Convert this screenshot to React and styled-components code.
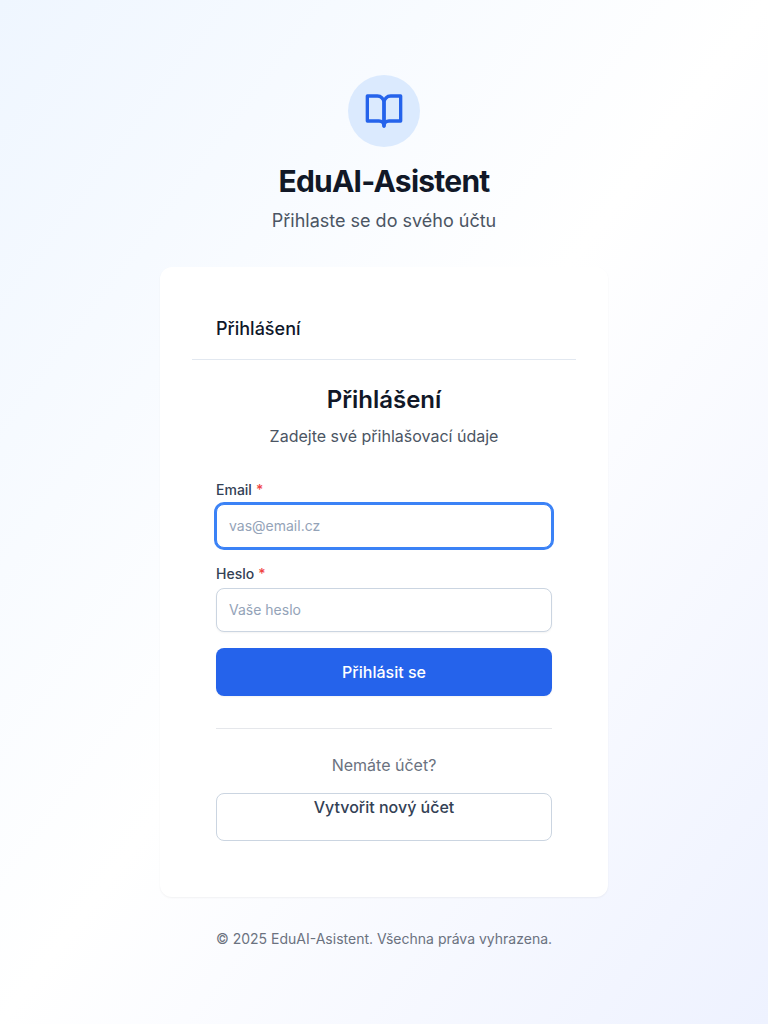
import React from "react";
import styled, { createGlobalStyle } from "styled-components";

const GlobalStyle = createGlobalStyle`
  *, *::before, *::after { box-sizing: border-box; }
  body { margin: 0; font-family: Inter, "Liberation Sans", sans-serif; line-height: 1.5; color: #0f172a; }
  h1, h2, h3, p { margin: 0; }
`;

const Page = styled.div`
  min-height: 100vh;
  display: flex;
  align-items: center;
  justify-content: center;
  background: linear-gradient(to bottom right, #eff6ff, #ffffff, #eef2ff);
`;

const Column = styled.main`
  width: 448px;
  display: flex;
  flex-direction: column;
  gap: 32px;
`;

const Brand = styled.header`
  display: flex;
  flex-direction: column;
  align-items: center;
`;

const LogoCircle = styled.div`
  width: 72px;
  height: 72px;
  margin-bottom: 16px;
  border-radius: 50%;
  display: flex;
  align-items: center;
  justify-content: center;
  background: #dbeafe;
  color: #2563eb;
`;

const BookIcon = styled.svg`
  width: 40px;
  height: 40px;
  fill: none;
  stroke: currentColor;
  stroke-width: 2;
  stroke-linecap: round;
  stroke-linejoin: round;
`;

const BrandTitle = styled.h1`
  font-size: 30px;
  line-height: 36px;
  font-weight: 700;
  letter-spacing: -0.025em;
  margin-bottom: 8px;
  color: #111827;
`;

const BrandText = styled.p`
  font-size: 18px;
  line-height: 28px;
  color: #4b5563;
`;

const Card = styled.section`
  background: #ffffff;
  border-radius: 12px;
  padding: 32px;
  box-shadow: 0 1px 2px rgba(0, 0, 0, 0.05);
`;

const CardHeader = styled.div`
  padding: 16px 24px;
  border-bottom: 1px solid #e2e8f0;
`;

const CardTitle = styled.h3`
  font-size: 18px;
  line-height: 28px;
  font-weight: 500;
`;

const CardBody = styled.div`
  padding: 24px;
`;

const FormIntro = styled.div`
  text-align: center;
  margin-bottom: 32px;
`;

const FormTitle = styled.h2`
  font-size: 24px;
  line-height: 32px;
  font-weight: 600;
  margin-bottom: 8px;
  color: #111827;
`;

const Muted = styled.p`
  font-size: 16px;
  line-height: 24px;
  color: ${(p) => p.$color || "#4b5563"};
`;

const Form = styled.form`
  display: flex;
  flex-direction: column;
  gap: 16px;
`;

const Field = styled.div`
  display: flex;
  flex-direction: column;
  gap: 4px;
`;

const Label = styled.label`
  font-size: 14px;
  line-height: 20px;
  font-weight: 500;
  color: #334155;
`;

const Required = styled.span`
  margin-left: 4px;
  color: #ef4444;
`;

const Input = styled.input`
  height: 44px;
  padding: 8px 12px 10px;
  border: 1px solid ${(p) => (p.$active ? "#3b82f6" : "#cbd5e1")};
  border-radius: 8px;
  background: #ffffff;
  font: 400 14px/20px Inter, "Liberation Sans", sans-serif;
  color: #0f172a;
  outline: none;
  box-shadow: ${(p) => (p.$active ? "0 0 0 2px #3b82f6, " : "")}0 1px 2px rgba(0, 0, 0, 0.05);
  &::placeholder { color: #94a3b8; opacity: 1; }
`;

const SubmitButton = styled.button`
  height: 48px;
  border: 0;
  border-radius: 8px;
  background: #2563eb;
  color: #ffffff;
  font: 500 16px/24px Inter, "Liberation Sans", sans-serif;
  box-shadow: 0 1px 2px rgba(0, 0, 0, 0.05);
`;

const Register = styled.div`
  margin-top: 32px;
  padding-top: 24px;
  border-top: 1px solid #e5e7eb;
  text-align: center;
`;

const RegisterLink = styled.a`
  display: block;
  height: 48px;
  margin-top: 16px;
  padding-top: 1px;
  border: 1px solid #cbd5e1;
  border-radius: 8px;
  font-size: 16px;
  line-height: 24px;
  font-weight: 500;
  color: #334155;
`;

const Footer = styled.footer`
  text-align: center;
  font-size: 14px;
  line-height: 20px;
  color: #6b7280;
`;

export default function App() {
  return (
    <Page>
      <GlobalStyle />
      <Column>
        <Brand>
          <LogoCircle>
            <BookIcon viewBox="0 0 24 24" aria-hidden="true">
              <path d="M2 3h6a4 4 0 0 1 4 4v14a3 3 0 0 0-3-3H2z" />
              <path d="M22 3h-6a4 4 0 0 0-4 4v14a3 3 0 0 1 3-3h7z" />
            </BookIcon>
          </LogoCircle>
          <BrandTitle>EduAI-Asistent</BrandTitle>
          <BrandText>Přihlaste se do svého účtu</BrandText>
        </Brand>
        <Card>
          <CardHeader><CardTitle>Přihlášení</CardTitle></CardHeader>
          <CardBody>
            <FormIntro>
              <FormTitle>Přihlášení</FormTitle>
              <Muted>Zadejte své přihlašovací údaje</Muted>
            </FormIntro>
            <Form>
              <Field>
                <Label htmlFor="email">Email<Required>*</Required></Label>
                <Input id="email" type="email" placeholder="vas@email.cz" $active />
              </Field>
              <Field>
                <Label htmlFor="password">Heslo<Required>*</Required></Label>
                <Input id="password" type="password" placeholder="Vaše heslo" />
              </Field>
              <SubmitButton type="button">Přihlásit se</SubmitButton>
            </Form>
            <Register>
              <Muted $color="#6b7280">Nemáte účet?</Muted>
              <RegisterLink>Vytvořit nový účet</RegisterLink>
            </Register>
          </CardBody>
        </Card>
        <Footer>© 2025 EduAI-Asistent. Všechna práva vyhrazena.</Footer>
      </Column>
    </Page>
  );
}
